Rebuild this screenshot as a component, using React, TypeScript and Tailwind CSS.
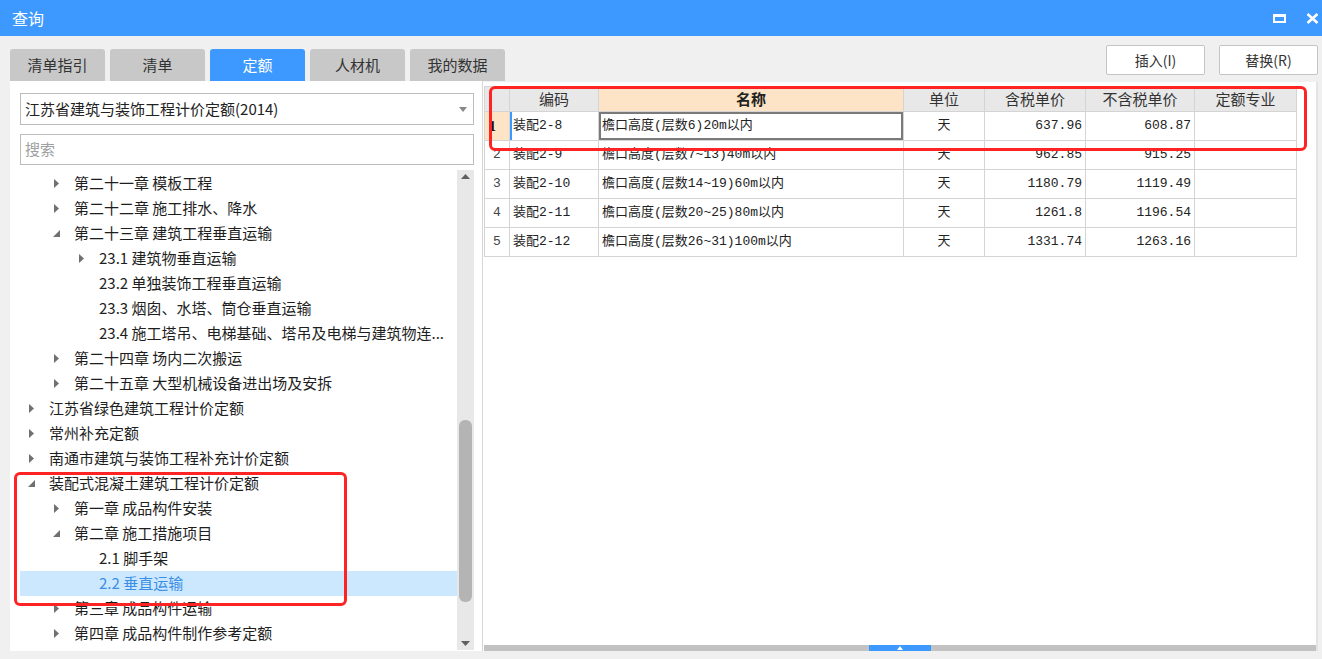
import React from 'react'

type Node = { l: 1 | 2 | 3; t: string; a?: 'c' | 'e'; sel?: boolean }

const tree: Node[] = [
  { l: 2, t: '第二十一章 模板工程', a: 'c' },
  { l: 2, t: '第二十二章 施工排水、降水', a: 'c' },
  { l: 2, t: '第二十三章 建筑工程垂直运输', a: 'e' },
  { l: 3, t: '23.1 建筑物垂直运输', a: 'c' },
  { l: 3, t: '23.2 单独装饰工程垂直运输' },
  { l: 3, t: '23.3 烟囱、水塔、筒仓垂直运输' },
  { l: 3, t: '23.4 施工塔吊、电梯基础、塔吊及电梯与建筑物连...' },
  { l: 2, t: '第二十四章 场内二次搬运', a: 'c' },
  { l: 2, t: '第二十五章 大型机械设备进出场及安拆', a: 'c' },
  { l: 1, t: '江苏省绿色建筑工程计价定额', a: 'c' },
  { l: 1, t: '常州补充定额', a: 'c' },
  { l: 1, t: '南通市建筑与装饰工程补充计价定额', a: 'c' },
  { l: 1, t: '装配式混凝土建筑工程计价定额', a: 'e' },
  { l: 2, t: '第一章 成品构件安装', a: 'c' },
  { l: 2, t: '第二章 施工措施项目', a: 'e' },
  { l: 3, t: '2.1 脚手架' },
  { l: 3, t: '2.2 垂直运输', sel: true },
  { l: 2, t: '第三章 成品构件运输', a: 'c' },
  { l: 2, t: '第四章 成品构件制作参考定额', a: 'c' },
]

const indent = { 1: 'pl-[4px]', 2: 'pl-[29px]', 3: 'pl-[54px]' }

const rows = [
  ['装配2-8', '檐口高度(层数6)20m以内', '天', '637.96', '608.87'],
  ['装配2-9', '檐口高度(层数7~13)40m以内', '天', '962.85', '915.25'],
  ['装配2-10', '檐口高度(层数14~19)60m以内', '天', '1180.79', '1119.49'],
  ['装配2-11', '檐口高度(层数20~25)80m以内', '天', '1261.8', '1196.54'],
  ['装配2-12', '檐口高度(层数26~31)100m以内', '天', '1331.74', '1263.16'],
]

const tabs = ['清单指引', '清单', '定额', '人材机', '我的数据']

const sans = "font-['Noto_Sans_CJK_SC','Noto_Sans',sans-serif]"
const mono = "font-['Liberation_Mono','Noto_Sans_CJK_SC',monospace]"

function Arrow({ a }: { a?: 'c' | 'e' }) {
  if (!a) return <span className="w-[14px] mr-[11px] shrink-0" />
  return (
    <span className="w-[14px] mr-[11px] shrink-0 flex items-center justify-center">
      {a === 'c' ? (
        <svg width="5" height="9" viewBox="0 0 5 9">
          <polygon points="0,0 5,4.5 0,9" fill="#707070" />
        </svg>
      ) : (
        <svg width="7" height="7" viewBox="0 0 7 7">
          <polygon points="7,0 7,7 0,7" fill="#707070" />
        </svg>
      )}
    </span>
  )
}

function LeftPanel() {
  return (
    <div className="w-[473px] shrink-0 flex flex-col">
      <div className="flex gap-[5px] mt-[13px] h-8">
        {tabs.map((t) => (
          <div
            key={t}
            className={
              t === '定额'
                ? 'w-[95px] shrink-0 rounded-t-[3px] bg-[#3d99ff] text-white text-[15px] flex items-center justify-center'
                : 'w-[95px] shrink-0 rounded-t-[3px] bg-[#c8c8c8] text-[#333] text-[15px] flex items-center justify-center'
            }
          >
            {t}
          </div>
        ))}
      </div>
      <div className="h-[570px] bg-white border-r border-[#d6d6d6] flex flex-col pl-[10px] pt-[12px]">
        <div className="w-[454px] h-8 border border-[#bdbdbd] flex items-center pl-[4px] pr-[6px] justify-between">
          <span className="text-[15px] text-[#222]">江苏省建筑与装饰工程计价定额(2014)</span>
          <svg width="8" height="5" viewBox="0 0 8 5">
            <polygon points="0,0 8,0 4,5" fill="#888" />
          </svg>
        </div>
        <div className="w-[454px] h-[31px] mt-[9px] border border-[#bdbdbd] flex items-center pl-[4px]">
          <span className="text-[15px] text-[#a0a0a0]">搜索</span>
        </div>
        <div className="flex mt-[5px] h-[480px]">
          <div className="w-[437px] pt-px flex flex-col">
            {tree.map((n, i) => (
              <div
                key={i}
                className={
                  'h-[25px] flex items-center ' +
                  indent[n.l] +
                  (n.sel ? ' bg-[#cce8ff] text-[#3a8ee6]' : ' text-[#1e1e1e]')
                }
              >
                <Arrow a={n.a} />
                <span className="text-[15px] whitespace-nowrap">{n.t}</span>
              </div>
            ))}
          </div>
          <div className="w-[17px] bg-[#e8e8e8] flex flex-col items-center">
            <div className="h-[13px] flex items-center justify-center">
              <svg width="9" height="5" viewBox="0 0 9 5">
                <polygon points="0,5 9,5 4.5,0" fill="#606060" />
              </svg>
            </div>
            <div className="h-[237px]" />
            <div className="w-[13px] h-[182px] rounded-[6px] bg-[#b4b4b4]" />
            <div className="flex-1" />
            <div className="h-[13px] flex items-center justify-center">
              <svg width="9" height="5" viewBox="0 0 9 5">
                <polygon points="0,0 9,0 4.5,5" fill="#606060" />
              </svg>
            </div>
          </div>
        </div>
      </div>
    </div>
  )
}

function Table() {
  const th = 'h-[25px] border border-[#d4d4d4] text-[15px] font-normal text-[#333] bg-[#e8e8e8] ' + sans
  const td = 'h-[29px] border border-[#d4d4d4] text-[13px] text-[#222] px-[3px] ' + mono
  return (
    <table className="border-collapse table-fixed w-[812px]">
      <colgroup>
        <col className="w-[25px]" />
        <col className="w-[89px]" />
        <col className="w-[305px]" />
        <col className="w-[81px]" />
        <col className="w-[101px]" />
        <col className="w-[109px]" />
        <col className="w-[102px]" />
      </colgroup>
      <thead>
        <tr>
          <th className={th}></th>
          <th className={th}>编码</th>
          <th className={'h-[25px] border border-[#d4d4d4] text-[15px] font-bold text-[#222] bg-[#fde4c6] ' + sans}>名称</th>
          <th className={th}>单位</th>
          <th className={th}>含税单价</th>
          <th className={th}>不含税单价</th>
          <th className={th}>定额专业</th>
        </tr>
      </thead>
      <tbody>
        {rows.map((r, i) => (
          <tr key={i}>
            <td
              className={
                i === 0
                  ? "h-[29px] border border-[#d4d4d4] bg-[#fde4c6] text-[14px] font-bold text-[#111] pl-[4px] font-['Liberation_Serif',serif]"
                  : 'h-[29px] border border-[#d4d4d4] text-[13px] text-[#444] text-center ' + mono
              }
            >
              {i + 1}
            </td>
            <td className={td + (i === 0 ? ' shadow-[inset_2px_0_0_#3d99ff]' : '')}>{r[0]}</td>
            <td className={td + (i === 0 ? ' shadow-[inset_0_0_0_2px_#7a7a7a]' : '')}>{r[1]}</td>
            <td className={td + ' text-center'}>{r[2]}</td>
            <td className={td + ' text-right'}>{r[3]}</td>
            <td className={td + ' text-right'}>{r[4]}</td>
            <td className={td}></td>
          </tr>
        ))}
      </tbody>
    </table>
  )
}

function RightPanel() {
  return (
    <div className="flex-1 flex flex-col pr-[4px]">
      <div className="flex justify-end gap-[14px] mt-[9px] h-[30px]">
        <button type="button" className="w-[99px] h-[30px] bg-white border border-[#c4c4c4] rounded-[2px] text-[14px] text-[#333]">
          插入(I)
        </button>
        <button type="button" className="w-[99px] h-[30px] bg-white border border-[#c4c4c4] rounded-[2px] text-[14px] text-[#333]">
          替换(R)
        </button>
      </div>
      <div className="mt-[7px] h-[569px] bg-white border-r-[2px] border-[#e4e4e4] flex flex-col pl-px">
        <div className="flex-1 pt-[4px]">
          <Table />
        </div>
        <div className="h-[6px] bg-[#c2c2c2] flex">
          <div className="w-[385px]" />
          <div className="w-[62px] bg-[#3d99ff] flex items-center justify-center">
            <svg width="6" height="4" viewBox="0 0 6 4">
              <polygon points="0,4 6,4 3,0" fill="#fff" />
            </svg>
          </div>
        </div>
      </div>
    </div>
  )
}

export default function App() {
  return (
    <div className={'w-[1322px] h-[659px] bg-[#f0f0f0] relative overflow-hidden ' + sans}>
      <div className="h-9 bg-[#3d99ff] flex items-center justify-between pl-[12px] pr-[3px]">
        <span className="text-white text-[16px]">查询</span>
        <div className="flex items-center gap-[20px]">
          <div className="w-[13px] h-[9px] border-[2px] border-t-[3px] border-white" />
          <svg width="13" height="11" viewBox="0 0 13 11">
            <path d="M1.5 1 L11.5 10 M11.5 1 L1.5 10" stroke="#fff" strokeWidth="2.6" />
          </svg>
        </div>
      </div>
      <div className="flex pl-[10px]">
        <LeftPanel />
        <RightPanel />
      </div>
      <div className="absolute left-[14px] top-[472px] w-[333px] h-[134px] border-[3px] border-[#ff2424] rounded-[6px]" />
      <div className="absolute left-[489px] top-[86px] w-[818px] h-[65px] border-[3px] border-[#ff2424] rounded-[6px]" />
    </div>
  )
}
